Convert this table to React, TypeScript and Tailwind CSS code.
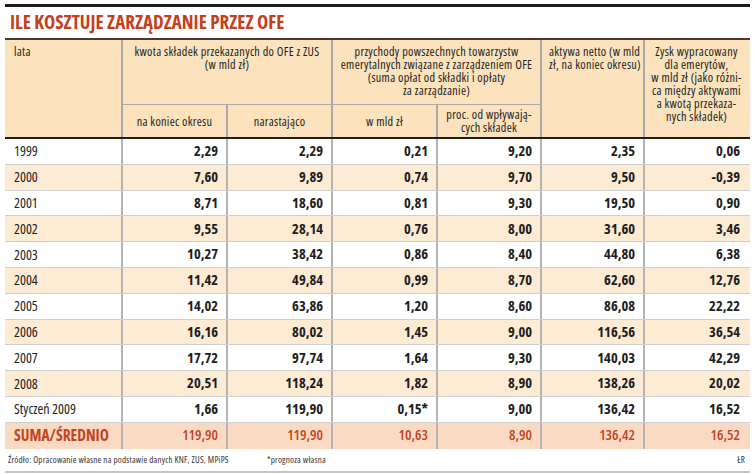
const rows: string[][] = [
  ["1999", "2,29", "2,29", "0,21", "9,20", "2,35", "0,06"],
  ["2000", "7,60", "9,89", "0,74", "9,70", "9,50", "-0,39"],
  ["2001", "8,71", "18,60", "0,81", "9,30", "19,50", "0,90"],
  ["2002", "9,55", "28,14", "0,76", "8,00", "31,60", "3,46"],
  ["2003", "10,27", "38,42", "0,86", "8,40", "44,80", "6,38"],
  ["2004", "11,42", "49,84", "0,99", "8,70", "62,60", "12,76"],
  ["2005", "14,02", "63,86", "1,20", "8,60", "86,08", "22,22"],
  ["2006", "16,16", "80,02", "1,45", "9,00", "116,56", "36,54"],
  ["2007", "17,72", "97,74", "1,64", "9,30", "140,03", "42,29"],
  ["2008", "20,51", "118,24", "1,82", "8,90", "138,26", "20,02"],
  ["Styczeń 2009", "1,66", "119,90", "0,15*", "9,00", "136,42", "16,52"],
];
const total = ["SUMA/ŚREDNIO", "119,90", "119,90", "10,63", "8,90", "136,42", "16,52"];

const cols = "grid grid-cols-[116px_105px_105px_105px_104px_103px_105px]";

function Row({ r, i }: { r: string[]; i: number }) {
  const bg = i % 2 === 1 ? "bg-[#fdebd3]" : "bg-white";
  return (
    <div className={`${cols} h-[25.8px] ${bg} border-b border-[#cfcfcf]`}>
      <div className="flex items-center pl-[9px] text-[14px] text-[#222]">{r[0]}</div>
      {r.slice(1).map((v, k) => (
        <div
          key={k}
          className="flex items-center justify-end pr-[8px] border-l-2 border-[#b4b4b4] text-[14.5px] font-bold text-[#1e1e1e]"
        >
          {v}
        </div>
      ))}
    </div>
  );
}

export default function App() {
  return (
    <div className="w-[755px] h-[474px] bg-white px-[5px] pt-[4px] font-['Open_Sans',sans-serif] [font-stretch:75%] leading-none">
      <div className="h-[3px] bg-[#1b1b1b]" />
      <div className="h-[31px] flex items-center pl-[5px] text-[19px] font-bold text-[#c63f1d]">
        ILE KOSZTUJE ZARZĄDZANIE PRZEZ OFE
      </div>

      {/* header */}
      <div className={`${cols} grid-rows-[64px_33px] bg-[#fce3bd] border-t-2 border-[#4a3a2c] border-b-[2px] border-b-[#1e1e1e] text-[12.2px] leading-[13px] tracking-[0.3px] text-[#222]`}>
        <div className="row-span-2 pl-[9px] pt-[5px]">lata</div>
        <div className="col-span-2 border-l-2 border-[#a9a9a9] pt-[5px] text-center">
          kwota składek przekazanych do OFE z ZUS
          <br />
          (w mld zł)
        </div>
        <div className="col-span-2 border-l-2 border-[#a9a9a9] pt-[5px] text-center">
          przychody powszechnych towarzystw
          <br />
          emerytalnych związane z zarządzeniem OFE
          <br />
          (suma opłat od składki i opłaty
          <br />
          za zarządzanie)
        </div>
        <div className="row-span-2 border-l-2 border-[#a9a9a9] pt-[5px] pl-[7px]">
          aktywa netto (w mld
          <br />
          zł, na koniec okresu)
        </div>
        <div className="row-span-2 border-l-2 border-[#a9a9a9] pt-[5px] text-center">
          Zysk wypracowany
          <br />
          dla emerytów,
          <br />
          w mld zł (jako różni-
          <br />
          ca między aktywami
          <br />
          a kwotą przekaza-
          <br />
          nych składek)
        </div>
        <div className="col-start-2 row-start-2 border-l-2 border-t border-[#a9a9a9] flex items-center justify-center">
          na koniec okresu
        </div>
        <div className="col-start-3 row-start-2 border-l-2 border-t border-[#a9a9a9] flex items-center justify-center">
          narastająco
        </div>
        <div className="col-start-4 row-start-2 border-l-2 border-t border-[#a9a9a9] flex items-center justify-center">
          w mld zł
        </div>
        <div className="col-start-5 row-start-2 border-l-2 border-t border-[#a9a9a9] flex items-center justify-center text-center">
          proc. od wpływają-
          <br />
          cych składek
        </div>
      </div>

      {/* body */}
      {rows.map((r, i) => (
        <Row key={r[0]} r={r} i={i} />
      ))}
      <div className={`${cols} h-[25.8px] bg-[#fbdac4] text-[#c4441e]`}>
        <div className="flex items-center pl-[9px] text-[15.5px] font-bold">{total[0]}</div>
        {total.slice(1).map((v, k) => (
          <div
            key={k}
            className="flex items-center justify-end pr-[8px] border-l-2 border-[#b4b4b4] text-[14.5px] font-semibold"
          >
            {v}
          </div>
        ))}
      </div>

      {/* footer */}
      <div className="h-[24px] flex items-center text-[9px] tracking-[0.2px] text-[#333] border-b-2 border-[#c4c4c4]">
        <div className="pl-[3px] w-[262px]">Źródło: Opracowanie własne na podstawie danych KNF, ZUS, MPiPS</div>
        <div>*prognoza własna</div>
        <div className="ml-auto pr-[5px]">ŁR</div>
      </div>
    </div>
  );
}
